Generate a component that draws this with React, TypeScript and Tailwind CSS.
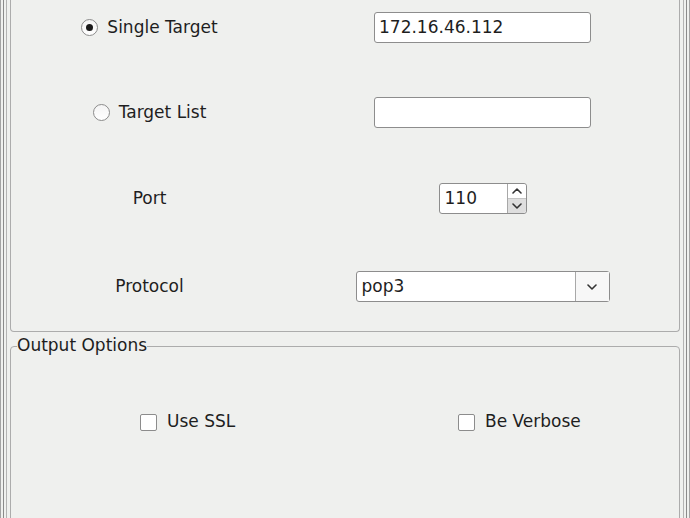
import React from 'react';

const font = { fontFamily: '"DejaVu Sans", "Liberation Sans", sans-serif' };

function Radio({ checked, label }: { checked?: boolean; label: string }) {
  return (
    <label className="flex items-center gap-[9px] text-[17px] text-[#1e1e1e]">
      <span className="flex h-[17px] w-[17px] items-center justify-center rounded-full border border-[#8c8c8c] bg-gradient-to-b from-[#f4f4f4] to-white">
        {checked && <span className="h-[7px] w-[7px] rounded-full bg-[#1a1a1a]" />}
      </span>
      {label}
    </label>
  );
}

function Check({ label }: { label: string }) {
  return (
    <label className="flex items-center gap-[10px] text-[17px] text-[#1e1e1e]">
      <span className="h-[17px] w-[17px] rounded-[2px] border border-[#8c8c8c] bg-white" />
      {label}
    </label>
  );
}

function Chevron({ up }: { up?: boolean }) {
  return (
    <svg width="10" height="6" viewBox="0 0 10 6" fill="none">
      <path
        d={up ? 'M1 5L5 1L9 5' : 'M1 1L5 5L9 1'}
        stroke="#333"
        strokeWidth="1.6"
        strokeLinecap="round"
        strokeLinejoin="round"
      />
    </svg>
  );
}

function Row({ left, right, className }: { left: React.ReactNode; right: React.ReactNode; className?: string }) {
  return (
    <div className={`flex h-[31px] items-center ${className ?? ''}`}>
      <div className="flex w-[277px] shrink-0 justify-center">{left}</div>
      <div className="flex w-[389px] shrink-0 justify-center">{right}</div>
    </div>
  );
}

export default function App() {
  const label = 'text-[17px] text-[#1e1e1e]';
  return (
    <div style={font} className="h-[518px] w-[690px] overflow-hidden bg-[#eff0ee]">
      {/* window frame lines */}
      <div className="h-full border-x border-[#a3a3a3] px-[2px]">
        <div className="h-full border-x border-[#8a8a8a] px-[2px]">
          <div className="h-full border-x border-[#b3b3b3] pl-[3px] pr-[3px]">
            {/* target group (top is scrolled off) */}
            <div className="h-[332px] rounded-b-[4px] border border-t-0 border-[#acacac] pt-[12px]">
              <Row
                left={<Radio checked label="Single Target" />}
                right={
                  <div className="flex h-[31px] w-[217px] items-center rounded-[3px] border border-[#8d8d8d] bg-white pl-[4px] text-[17px] text-[#1e1e1e]">
                    172.16.46.112
                  </div>
                }
              />
              <Row
                className="mt-[54px]"
                left={<Radio label="Target List" />}
                right={<div className="h-[31px] w-[217px] rounded-[3px] border border-[#8d8d8d] bg-white" />}
              />
              <Row
                className="mt-[55px]"
                left={<span className={label}>Port</span>}
                right={
                  <div className="flex h-[31px] w-[88px] rounded-[3px] border border-[#8d8d8d] bg-white">
                    <div className={`flex flex-1 items-center pl-[5px] ${label}`}>110</div>
                    <div className="flex w-[19px] flex-col border-l border-[#a8a8a8]">
                      <div className="flex flex-1 items-center justify-center rounded-tr-[3px] bg-white">
                        <Chevron up />
                      </div>
                      <div className="flex flex-1 items-center justify-center rounded-br-[3px] border-t border-[#c4c4c4] bg-[#dedede]">
                        <Chevron />
                      </div>
                    </div>
                  </div>
                }
              />
              <Row
                className="mt-[57px]"
                left={<span className={label}>Protocol</span>}
                right={
                  <div className="flex h-[31px] w-[254px] rounded-[3px] border border-[#8d8d8d] bg-white">
                    <div className={`flex flex-1 items-center pl-[5px] ${label}`}>pop3</div>
                    <div className="flex w-[34px] items-center justify-center border-l border-[#a8a8a8] bg-[#f7f7f7]">
                      <Chevron />
                    </div>
                  </div>
                }
              />
            </div>

            {/* output options group */}
            <div className="relative mt-[14px] h-[220px] rounded-[4px] border border-[#acacac]">
              <span className="absolute left-[6px] top-[-12px] bg-[#eff0ee] text-[17px] leading-[20px] text-[#1e1e1e]">
                Output Options
              </span>
              <div className="flex pl-[129px] pt-[65px]">
                <div className="flex h-[20px] w-[318px] items-center">
                  <Check label="Use SSL" />
                </div>
                <div className="flex h-[20px] items-center">
                  <Check label="Be Verbose" />
                </div>
              </div>
            </div>
          </div>
        </div>
      </div>
    </div>
  );
}
